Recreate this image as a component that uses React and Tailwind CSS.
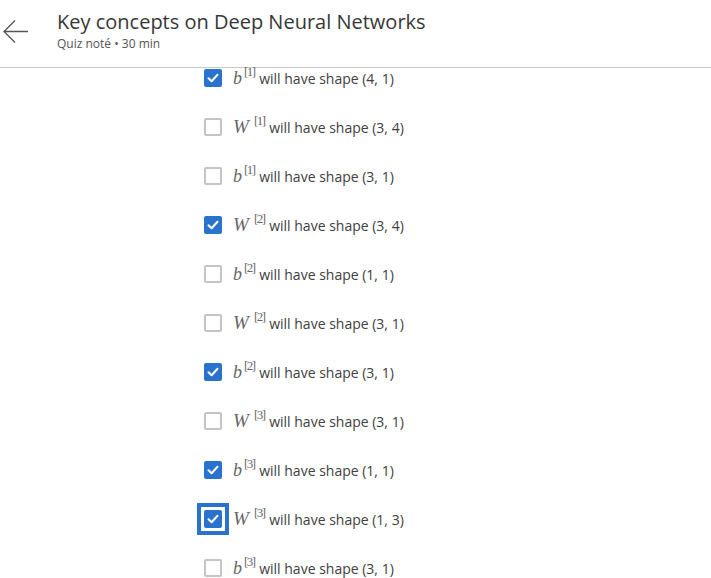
import React from "react";

const items = [
  { v: "b", n: 1, shape: "(4, 1)", checked: true },
  { v: "W", n: 1, shape: "(3, 4)" },
  { v: "b", n: 1, shape: "(3, 1)" },
  { v: "W", n: 2, shape: "(3, 4)", checked: true },
  { v: "b", n: 2, shape: "(1, 1)" },
  { v: "W", n: 2, shape: "(3, 1)" },
  { v: "b", n: 2, shape: "(3, 1)", checked: true },
  { v: "W", n: 3, shape: "(3, 1)" },
  { v: "b", n: 3, shape: "(1, 1)", checked: true },
  { v: "W", n: 3, shape: "(1, 3)", checked: true, focused: true },
  { v: "b", n: 3, shape: "(3, 1)" },
];

function Box({ checked, focused }) {
  return (
    <div className="relative w-[18px] h-[18px] shrink-0">
      {focused && (
        <div className="absolute -inset-[7px] border-4 border-[#2a73cc]" />
      )}
      {checked ? (
        <div className="w-[18px] h-[18px] rounded-[2px] bg-[#2a73cc] flex items-center justify-center">
          <svg width="12" height="10" viewBox="0 0 12 10" fill="none">
            <path d="M1.5 5.2 L4.6 8.2 L10.5 1.8" stroke="white" strokeWidth="2" strokeLinecap="round" strokeLinejoin="round" />
          </svg>
        </div>
      ) : (
        <div className="w-[18px] h-[18px] rounded-[2px] border-2 border-[#c4c4c4] bg-white" />
      )}
    </div>
  );
}

export default function App() {
  return (
    <div className="w-[711px] h-[578px] overflow-hidden bg-white text-[#333]" style={{ fontFamily: "'Open Sans', sans-serif" }}>
      <div className="h-[68px] border-b border-[#c8c8c8] flex">
        <div className="w-[57px] pt-[19px] pl-[2px]">
          <svg width="28" height="26" viewBox="0 0 28 26" fill="none">
            <path d="M26 12.5 H2 M13 1.5 L2 12.5 L13 23.5" stroke="#555" strokeWidth="1.3" />
          </svg>
        </div>
        <div className="pt-[8px]">
          <div className="text-[20px] leading-[28px] text-[#373737]">Key concepts on Deep Neural Networks</div>
          <div className="text-[12px] leading-[16px] text-[#555]">Quiz noté • 30 min</div>
        </div>
      </div>
      <div className="flex flex-col gap-[29px] pl-[204px]">
        {items.map((it, i) => (
          <div key={i} className="h-5 flex items-center">
            <Box checked={it.checked} focused={it.focused} />
            <span className="ml-[11px] flex items-start text-[#666]" style={{ fontFamily: "'Liberation Serif', serif" }}>
              <span className={it.v === "W" ? "italic text-[19px] leading-5 w-[19px]" : "italic text-[18px] leading-5"}>{it.v}</span>
              <span className="text-[13px] leading-3 -mt-[2px] ml-[2px] pr-[1.5px] tracking-[-1.5px]">[{it.n}]</span>
            </span>
            <span className="ml-[3px] text-[14px] text-[#404040]">will have shape {it.shape}</span>
          </div>
        ))}
      </div>
    </div>
  );
}
